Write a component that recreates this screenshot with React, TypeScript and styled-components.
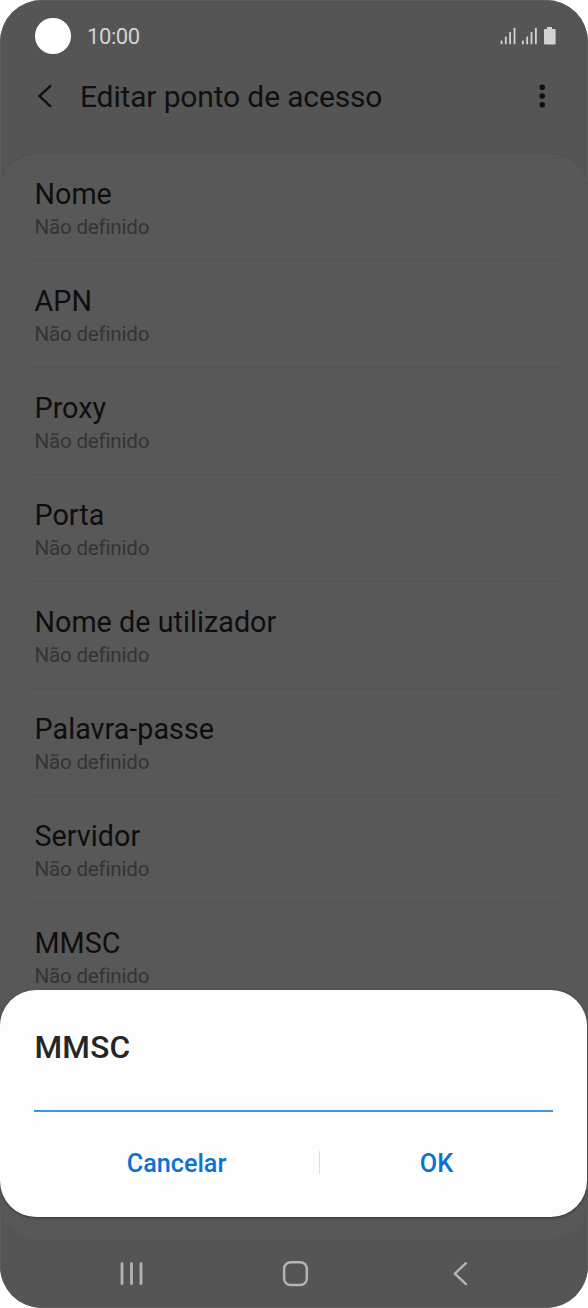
import React from "react";
import styled, { createGlobalStyle } from "styled-components";

const GlobalStyle = createGlobalStyle`
  * { box-sizing: border-box; }
  body { margin: 0; background: #fff; font-family: Roboto, "Noto Sans", sans-serif; }
  h1, h2, p { margin: 0; font-weight: 400; }
  button { margin: 0; padding: 0; border: 0; background: none; font-family: inherit; }
  svg { display: block; }
`;

const Phone = styled.main`
  position: relative;
  display: flex;
  flex-direction: column;
  width: 588px;
  height: 1308px;
  overflow: hidden;
  border-radius: 42px;
  background: #555;
  box-shadow: inset 0 0 0 1px #5d5d5d;
`;

const StatusBar = styled.header`
  display: flex;
  align-items: center;
  height: 72px;
  padding: 0 32px 0 35px;
`;

const Camera = styled.span`
  width: 35.5px;
  height: 35.5px;
  border-radius: 50%;
  background: #fff;
`;

const Clock = styled.span`
  flex: 1;
  margin-left: 16.5px;
  padding-top: 2px;
  color: #d2d2d2;
  font-size: 22px;
  letter-spacing: -0.4px;
  line-height: 26px;
`;

const TitleBar = styled.div`
  display: flex;
  align-items: center;
  height: 81px;
  padding: 0 38px 32px 35px;
`;

const IconButton = styled.button<{ $width: number }>`
  width: ${({ $width }) => $width}px;
  height: 28px;
`;

const Title = styled.h1`
  flex: 1;
  margin-left: 24px;
  color: #101010;
  font-size: 30px;
  letter-spacing: -0.15px;
  line-height: 36px;
`;

const Settings = styled.section`
  height: 1086px;
  padding: 0 28px 0 29px;
  border-top: 1px solid #4f4f4f;
  border-radius: 36px;
  background: #585858;
`;

const Row = styled.div`
  height: 107px;
  padding: 23px 5.5px 0;
  border-bottom: 1px solid #535353;
`;

const Name = styled.h2`
  color: #0e0e0e;
  font-size: 28.7px;
  letter-spacing: 0.04px;
  line-height: 34px;
`;

const Value = styled.p`
  margin-top: 4px;
  color: #343434;
  font-size: 20.6px;
  letter-spacing: -0.2px;
  line-height: 24px;
`;

const NavBar = styled.nav`
  display: flex;
  align-items: center;
  justify-content: space-between;
  height: 69px;
  padding: 1px 119px 0;
`;

const Dialog = styled.div`
  position: absolute;
  top: 990px;
  left: 0;
  width: 587px;
  height: 226.5px;
  padding: 40px 34px 0;
  border-radius: 36px;
  background: #fdfdfd;
  box-shadow: 0 1px 3px rgba(0, 0, 0, 0.4);
`;

const DialogTitle = styled.h2`
  padding-left: 0.5px;
  color: #262626;
  font-size: 31.6px;
  font-weight: 500;
  letter-spacing: 0.2px;
  line-height: 36px;
`;

const Field = styled.div`
  height: 46px;
  border-bottom: 2px solid #3e93e2;
`;

const Actions = styled.div`
  display: flex;
  align-items: center;
  height: 101px;
`;

const Action = styled.button<{ $width: number }>`
  width: ${({ $width }) => $width}px;
  padding-top: 2px;
  color: #0b72d2;
  font-size: 25.2px;
  font-weight: 500;
  line-height: 30px;
`;

const Divider = styled.span`
  width: 1px;
  height: 23px;
  background: #dedede;
`;

const settings = ["Nome", "APN", "Proxy", "Porta", "Nome de utilizador", "Palavra-passe", "Servidor", "MMSC"];

const StatusIcons = () => (
  <svg width="56" height="20" viewBox="500 26 56 20" fill="#d2d2d2">
    {[500.6, 522].map((x) => (
      <g key={x}>
        <rect x={x} y="40.6" width="1.8" height="3.6" rx=".5" />
        <rect x={x + 4.3} y="36.4" width="1.8" height="7.8" rx=".5" />
        <rect x={x + 8.6} y="32" width="1.8" height="12.2" rx=".5" />
        <rect x={x + 13} y="27.8" width="1.8" height="16.4" rx=".5" />
      </g>
    ))}
    <path d="M547 27h5v2h2.6q1 0 1 1v13.4q0 1-1 1h-9.6q-1 0-1-1V30q0-1 1-1h2z" />
  </svg>
);

export default function App() {
  return (
    <>
      <GlobalStyle />
      <Phone>
        <StatusBar>
          <Camera />
          <Clock>10:00</Clock>
          <StatusIcons />
        </StatusBar>
        <TitleBar>
          <IconButton $width={21} aria-label="Voltar">
            <svg width="21" height="28" viewBox="35 82.7 21 28" fill="none" stroke="#101010" strokeWidth="2.3">
              <path d="M51 85.1 39.4 95.8 51 106.5" />
            </svg>
          </IconButton>
          <Title>Editar ponto de acesso</Title>
          <IconButton $width={16} aria-label="Mais opções">
            <svg width="16" height="28" viewBox="534 82.7 16 28" fill="#101010">
              <circle cx="542.2" cy="87" r="2.8" />
              <circle cx="542.2" cy="95.7" r="2.8" />
              <circle cx="542.2" cy="104.4" r="2.8" />
            </svg>
          </IconButton>
        </TitleBar>
        <Settings>
          {settings.map((name) => (
            <Row key={name}>
              <Name>{name}</Name>
              <Value>Não definido</Value>
            </Row>
          ))}
          <Row />
        </Settings>
        <NavBar>
          <svg width="26" height="28" viewBox="119 1260 26 28" stroke="#b4b4b4" strokeWidth="2.8" strokeLinecap="round">
            <path d="M122 1263.7v20M131.5 1263.7v20M141 1263.7v20" />
          </svg>
          <svg width="28" height="28" viewBox="282 1260 28 28" fill="none" stroke="#b4b4b4" strokeWidth="2.5">
            <rect x="284.1" y="1262.3" width="22.7" height="22.7" rx="6.5" />
          </svg>
          <svg width="22" height="28" viewBox="447 1260 22 28" fill="none" stroke="#b4b4b4" strokeWidth="2.4" strokeLinecap="round" strokeLinejoin="round">
            <path d="M466 1263.2 454.8 1273.7 466 1284.2" />
          </svg>
        </NavBar>
        <Dialog role="dialog">
          <DialogTitle>MMSC</DialogTitle>
          <Field />
          <Actions>
            <Action $width={285}>Cancelar</Action>
            <Divider />
            <Action $width={233}>OK</Action>
          </Actions>
        </Dialog>
      </Phone>
    </>
  );
}
